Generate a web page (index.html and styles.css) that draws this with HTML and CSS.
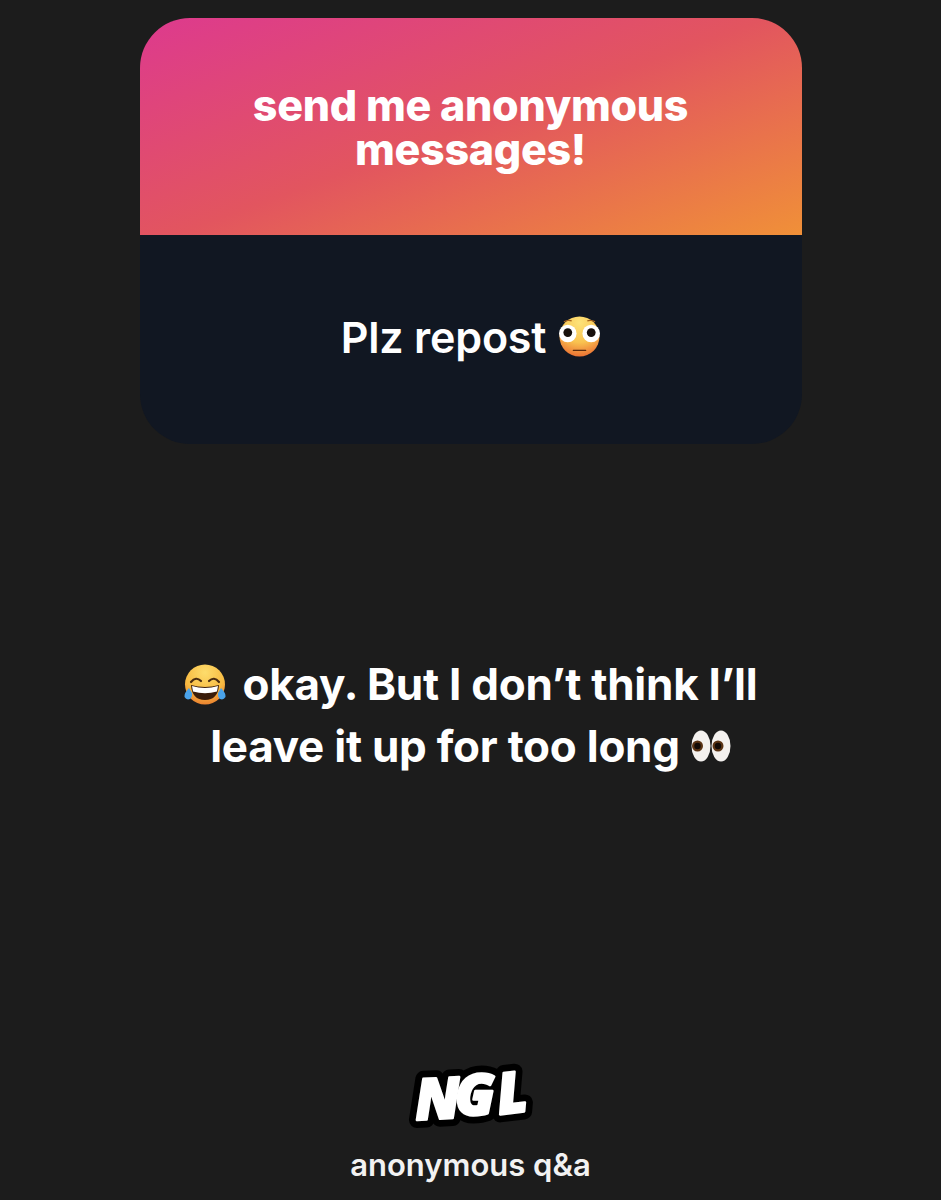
FILE: index.html
```html
<!DOCTYPE html>
<html lang="en">

<head>
    <meta charset="UTF-8">
    <meta name="viewport" content="width=device-width, initial-scale=1.0">
    <title>NGL reply</title>
    <link rel="stylesheet" href="styles.css">
</head>

<body>

    <section class="card">
        <div class="card-head">
            <h2>send me anonymous<br>messages!</h2>
        </div>
        <div class="card-body">
            <p>Plz repost</p>
            <svg class="emoji-flushed" viewBox="0 0 42 42" role="img" aria-label="flushed face">
                <defs>
                    <radialGradient id="flushedFace" cx="50%" cy="15%" r="90%">
                        <stop offset="0" stop-color="#fde37a"/>
                        <stop offset="0.55" stop-color="#f9c350"/>
                        <stop offset="1" stop-color="#e9662f"/>
                    </radialGradient>
                </defs>
                <circle cx="21" cy="21" r="20.5" fill="url(#flushedFace)"/>
                <circle cx="9" cy="18" r="9" fill="#fff"/>
                <circle cx="33" cy="18" r="9" fill="#fff"/>
                <circle cx="9" cy="17" r="4.500" fill="#17100c"/>
                <circle cx="33" cy="17" r="4.500" fill="#17100c"/>
                <path d="M5 6 Q9 3.500 13 5 M29 5 Q33 3.500 37 6" fill="none" stroke="#a8641c" stroke-width="1.200"/>
                <rect x="14" y="34.500" width="14" height="1.400" rx="0.700" fill="#5a2c10"/>
            </svg>
        </div>
    </section>

    <main class="reply">
        <div class="reply-line">
            <svg class="emoji-laugh" viewBox="0 0 42 41" role="img" aria-label="face with tears of joy">
                <defs>
                    <radialGradient id="laughFace" cx="50%" cy="20%" r="85%">
                        <stop offset="0" stop-color="#fddc6c"/>
                        <stop offset="0.6" stop-color="#f8bb42"/>
                        <stop offset="1" stop-color="#e8792c"/>
                    </radialGradient>
                </defs>
                <circle cx="21" cy="20.500" r="20" fill="url(#laughFace)"/>
                <path d="M7 18 Q12 12 17 17 M25 17 Q30 12 35 18" fill="none" stroke="#4a2c10" stroke-width="2.200" stroke-linecap="round"/>
                <path d="M7 21 Q21 25 35 21 Q34 36 21 36 Q8 36 7 21Z" fill="#3a1d0a"/>
                <path d="M8 22 Q21 26 34 22 L33 27.500 Q21 31 9 27.500Z" fill="#fff"/>
                <path d="M5 24 Q0 29 0.500 33 Q2.500 36.500 6 35 Q8.500 33 8 29Z" fill="#4aa3ea"/>
                <path d="M37 24 Q42 29 41.500 33 Q39.500 36.500 36 35 Q33.500 33 34 29Z" fill="#4aa3ea"/>
            </svg>
            <span>okay. But I don’t think I’ll</span>
        </div>
        <div class="reply-line line-eyes">
            <span>leave it up for too long</span>
            <svg class="emoji-eyes" viewBox="0 0 40 32" role="img" aria-label="eyes">
                <ellipse cx="10" cy="16" rx="9.500" ry="15.500" fill="#f4f1ee"/>
                <ellipse cx="30" cy="16" rx="9.500" ry="15.500" fill="#f4f1ee"/>
                <circle cx="6.500" cy="16" r="5.500" fill="#5a3314"/>
                <circle cx="27" cy="16" r="5.500" fill="#5a3314"/>
                <circle cx="6.500" cy="16" r="3.200" fill="#120a06"/>
                <circle cx="27" cy="16" r="3.200" fill="#120a06"/>
            </svg>
        </div>
    </main>

    <footer class="brand">
        <svg class="logo" viewBox="0 0 160 100" role="img" aria-label="NGL">
            <g class="logo-back">
                <text x="25" y="74" transform="rotate(-3 45 55)">N</text>
                <text x="65" y="70">G</text>
                <text x="107" y="68" transform="rotate(-7 120 50)">L</text>
            </g>
            <g class="logo-front">
                <text x="25" y="74" transform="rotate(-3 45 55)">N</text>
                <text x="65" y="70">G</text>
                <text x="107" y="68" transform="rotate(-7 120 50)">L</text>
            </g>
        </svg>
        <p>anonymous q&amp;a</p>
    </footer>

</body>

</html>
```

FILE: styles.css
```css
body {
    font-family: 'Inter', 'Liberation Sans', sans-serif;
    background-color: #1c1c1c;
    color: #fff;
    margin: 0;
    height: 1200px;
    overflow: hidden;
    display: flex;
    flex-direction: column;
    align-items: center;
}

.card {
    width: 662px;
    margin-top: 18px;
    border-radius: 50px;
    overflow: hidden;
}

.card-head {
    height: 217px;
    display: flex;
    align-items: center;
    justify-content: center;
    background: linear-gradient(160deg, #dd3a8e 0%, #e2555f 50%, #f09038 100%);
}

.card-head h2 {
    margin: 0;
    font-size: 43px;
    line-height: 44px;
    font-weight: 800;
    letter-spacing: -0.3px;
    text-align: center;
}

.card-body {
    height: 203px;
    padding-bottom: 6px;
    display: flex;
    align-items: center;
    justify-content: center;
    gap: 13px;
    background-color: #111722;
}

.card-body p {
    margin: 0;
    font-size: 43px;
    font-weight: 600;
    letter-spacing: -0.2px;
}

.emoji-flushed {
    width: 41px;
    height: 41px;
}

.reply {
    margin-top: 209px;
    display: flex;
    flex-direction: column;
    align-items: center;
    font-size: 44px;
    line-height: 62px;
    font-weight: 700;
    letter-spacing: -0.25px;
}

.reply-line {
    display: flex;
    align-items: center;
    gap: 17px;
}

.line-eyes {
    gap: 11px;
}

.emoji-laugh {
    width: 42px;
    height: 41px;
}

.emoji-eyes {
    width: 40px;
    height: 32px;
}

.brand {
    margin-top: 268px;
    display: flex;
    flex-direction: column;
    align-items: center;
}

.logo {
    width: 160px;
    height: 100px;
}

.logo text {
    font-family: 'Open Sans', 'Liberation Sans', sans-serif;
    font-size: 57px;
    font-weight: 800;
    font-style: italic;
    stroke-linejoin: round;
}

.logo-back text {
    fill: #000;
    stroke: #000;
    stroke-width: 16px;
}

.logo-front text {
    fill: #fff;
    stroke: #fff;
    stroke-width: 2.500px;
}

.brand p {
    margin: 2px 0 0;
    font-size: 31px;
    line-height: 36px;
    font-weight: 600;
    color: #f2f2f2;
}
```
